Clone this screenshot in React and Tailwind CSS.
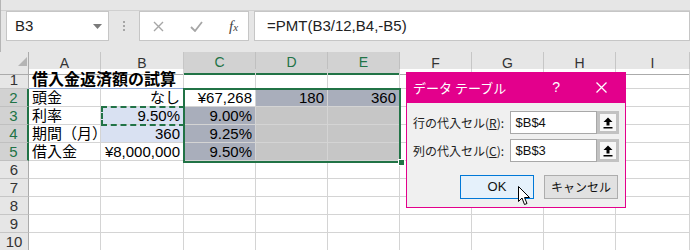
import React from "react";

const cols = "grid grid-cols-[29px_72px_83px_72px_72px_72px_72px_72px_72px_74px]";
const letters = ["A", "B", "C", "D", "E", "F", "G", "H", "I"];

const BLUEGRAY = "bg-[#a9aebb]";
const GRAY = "bg-[#c6c6c6] border-[#a9a9a9]";
const LIGHT = "bg-[#d9e1f2]";

const rows = [
  { n: 1, h: "h-[20px]", cells: [{ t: "借入金返済額の試算", cls: "font-bold text-[16px] overflow-visible z-10", a: "l", under: true }, { under: true }] },
  { n: 2, cells: [{ t: "頭金", a: "l" }, { t: "なし" }, { t: "¥67,268" }, { t: "180", cls: BLUEGRAY }, { t: "360", cls: BLUEGRAY }] },
  { n: 3, cells: [{ t: "利率", a: "l" }, { t: "9.50%", cls: LIGHT }, { t: "9.00%", cls: BLUEGRAY }, { cls: GRAY }, { cls: GRAY }] },
  { n: 4, cells: [{ t: "期間（月）", a: "l" }, { t: "360", cls: LIGHT }, { t: "9.25%", cls: BLUEGRAY }, { cls: GRAY }, { cls: GRAY }] },
  { n: 5, cells: [{ t: "借入金", a: "l" }, { t: "¥8,000,000" }, { t: "9.50%", cls: BLUEGRAY }, { cls: GRAY }, { cls: GRAY }] },
  { n: 6, cells: [] },
  { n: 7, cells: [] },
  { n: 8, cells: [] },
  { n: 9, cells: [] },
  { n: 10, cells: [] },
];

function Cell({ c }) {
  const cell = c || {};
  return (
    <div
      className={`flex items-end border-r border-b border-[#d4d4d4] px-[3px] text-[15px] leading-[17px] whitespace-nowrap text-black ${
        cell.a === "l" ? "justify-start" : "justify-end"
      } ${cell.under ? "border-b-[#8ea9db]" : ""} ${cell.cls || ""}`}
    >
      {cell.t}
    </div>
  );
}

function UpButton() {
  return (
    <div className="w-[22px] h-full border-[3px] border-[#c2c2c2] bg-[#f7f7f7] flex items-center justify-center">
      <svg width="10" height="12" viewBox="0 0 10 12">
        <path d="M5 0.5 L9.5 5 L6.5 5 L6.5 8.5 L3.5 8.5 L3.5 5 L0.5 5 Z" fill="#000" />
        <rect x="0.5" y="10" width="9" height="1.5" fill="#000" />
      </svg>
    </div>
  );
}

export default function App() {
  return (
    <div className="relative w-[690px] h-[250px] overflow-hidden bg-white font-['Liberation_Sans','Noto_Sans_CJK_JP',sans-serif]">
      {/* formula bar */}
      <div className="h-[52px] bg-[#e6e6e6] border-l border-[#b5b5b5]">
        <div className="h-[11px] border-b border-[#d0d0d0]" />
        <div className="flex h-[30px] items-stretch">
          <div className="ml-[5px] w-[103px] bg-white border border-[#c6c6c6] flex items-center justify-between pl-[8px] pr-[6px]">
            <span className="text-[15px] text-[#222]">B3</span>
            <svg width="9" height="5" viewBox="0 0 9 5">
              <path d="M0 0 L9 0 L4.5 5 Z" fill="#7a7a7a" />
            </svg>
          </div>
          <div className="w-[30px] flex flex-col items-center justify-center gap-[2px]">
            <span className="w-[2px] h-[2px] bg-[#a6a6a6]" />
            <span className="w-[2px] h-[2px] bg-[#a6a6a6]" />
            <span className="w-[2px] h-[2px] bg-[#a6a6a6]" />
          </div>
          <div className="w-[110px] bg-white border border-[#c6c6c6] flex items-center pl-[13px] gap-[26px]">
            <svg width="11" height="11" viewBox="0 0 11 11">
              <path d="M1 1 L10 10 M10 1 L1 10" stroke="#a6a6a6" strokeWidth="1.4" />
            </svg>
            <svg width="13" height="11" viewBox="0 0 13 11">
              <path d="M1 6 L5 10 L12 1" stroke="#a6a6a6" strokeWidth="1.8" fill="none" />
            </svg>
            <span className="font-['Liberation_Serif',serif] italic text-[15px] text-[#444]">
              f<span className="text-[11px]">x</span>
            </span>
          </div>
          <div className="ml-[5px] flex-1 bg-white border border-[#c6c6c6] flex items-center pl-[12px] text-[15px] text-[#222]">
            =PMT(B3/12,B4,-B5)
          </div>
        </div>
      </div>

      {/* sheet */}
      <div className="relative">
        <div className={`${cols} h-[17px] bg-[#e6e6e6]`}>
          <div className="relative border-r border-b border-[#ababab]">
            <svg className="absolute left-[18px] top-[5px]" width="9" height="9" viewBox="0 0 9 9">
              <path d="M9 0 L9 9 L0 9 Z" fill="#b4b4b4" />
            </svg>
          </div>
          {letters.map((l, i) => {
            const hi = i >= 2 && i <= 4;
            return (
              <div
                key={l}
                className={`flex items-center justify-center text-[14px] border-r ${
                  hi
                    ? "bg-[#d2d2d2] text-[#217346] border-[#c0c0c0] border-b-2 border-b-[#217346]"
                    : "text-[#333] border-[#c6c6c6] border-b border-b-[#ababab]"
                }`}
              >
                {l}
              </div>
            );
          })}
        </div>
        {rows.map((r) => {
          const hi = r.n >= 2 && r.n <= 5;
          return (
            <div key={r.n} className={`${cols} ${r.h || "h-[18px]"}`}>
              <div
                className={`flex items-end justify-center text-[15px] leading-[17px] border-b ${
                  hi
                    ? "bg-[#d2d2d2] text-[#217346] border-r-2 border-r-[#217346] border-b-[#c0c0c0]"
                    : "bg-[#e6e6e6] text-[#333] border-r border-r-[#ababab] border-b-[#c6c6c6]"
                }`}
              >
                {r.n}
              </div>
              {letters.map((l, i) => (
                <Cell key={l} c={r.cells[i]} />
              ))}
            </div>
          );
        })}

        {/* copy marquee on B3 */}
        <div className="absolute left-[101px] top-[54px] w-[84px] h-[20px] border-2 border-dashed border-[#217346]" />
        {/* selection C2:E5 */}
        <div className="absolute left-[183px] top-[36px] w-[218px] h-[75px] border-2 border-[#217346]" />
        <div className="absolute left-[398px] top-[107px] w-[7px] h-[7px] bg-[#217346] border border-white" />
      </div>

      {/* data table dialog */}
      <div className="absolute left-[406px] top-[72px] w-[220px] h-[136px] flex flex-col font-['Noto_Sans_CJK_JP','Liberation_Sans',sans-serif] text-[12px]">
        <div className="h-[31px] bg-[#e3008c] flex items-center px-[7px] text-white">
          <span className="text-[13px]">データ テーブル</span>
          <span className="ml-auto mr-[36px] text-[14px] font-['Liberation_Sans',sans-serif]">?</span>
          <svg className="mr-[12px]" width="11" height="11" viewBox="0 0 11 11">
            <path d="M0.5 0.5 L10.5 10.5 M10.5 0.5 L0.5 10.5" stroke="#fff" strokeWidth="1.3" />
          </svg>
        </div>
        <div className="flex-1 bg-[#f0f0f0] border border-t-0 border-[#e3008c] px-[6px] pt-[8px] flex flex-col gap-[5px]">
          <div className="flex items-center h-[23px]">
            <span className="w-[98px] text-[#222]">
              行の代入セル(<span className="underline">R</span>):
            </span>
            <div className="w-[87px] h-full bg-white border border-[#a8a8a8] flex items-center px-[4px] text-[13px] font-['Liberation_Sans',sans-serif] text-[#111]">
              $B$4
            </div>
            <UpButton />
          </div>
          <div className="flex items-center h-[23px]">
            <span className="w-[98px] text-[#222]">
              列の代入セル(<span className="underline">C</span>):
            </span>
            <div className="w-[87px] h-full bg-white border border-[#a8a8a8] flex items-center px-[4px] text-[13px] font-['Liberation_Sans',sans-serif] text-[#111]">
              $B$3
            </div>
            <UpButton />
          </div>
          <div className="flex gap-[10px] mt-[8px] ml-[47px]">
            <div className="w-[74px] h-[24px] border border-[#0078d7] bg-[#e5f1fb] flex items-center justify-center text-[13px] text-[#111] font-['Liberation_Sans',sans-serif]">
              OK
            </div>
            <div className="w-[74px] h-[24px] border border-[#adadad] bg-[#e1e1e1] flex items-center justify-center text-[#111]">
              キャンセル
            </div>
          </div>
        </div>
      </div>

      {/* mouse pointer */}
      <svg className="absolute left-[518px] top-[186px]" width="13" height="20" viewBox="0 0 13 20">
        <path
          d="M0.5 0.5 L0.5 15.5 L4 12 L6.5 18.5 L9 17.5 L6.5 11.5 L11.5 11.5 Z"
          fill="#fff"
          stroke="#000"
          strokeWidth="1"
          strokeLinejoin="round"
        />
      </svg>
    </div>
  );
}
